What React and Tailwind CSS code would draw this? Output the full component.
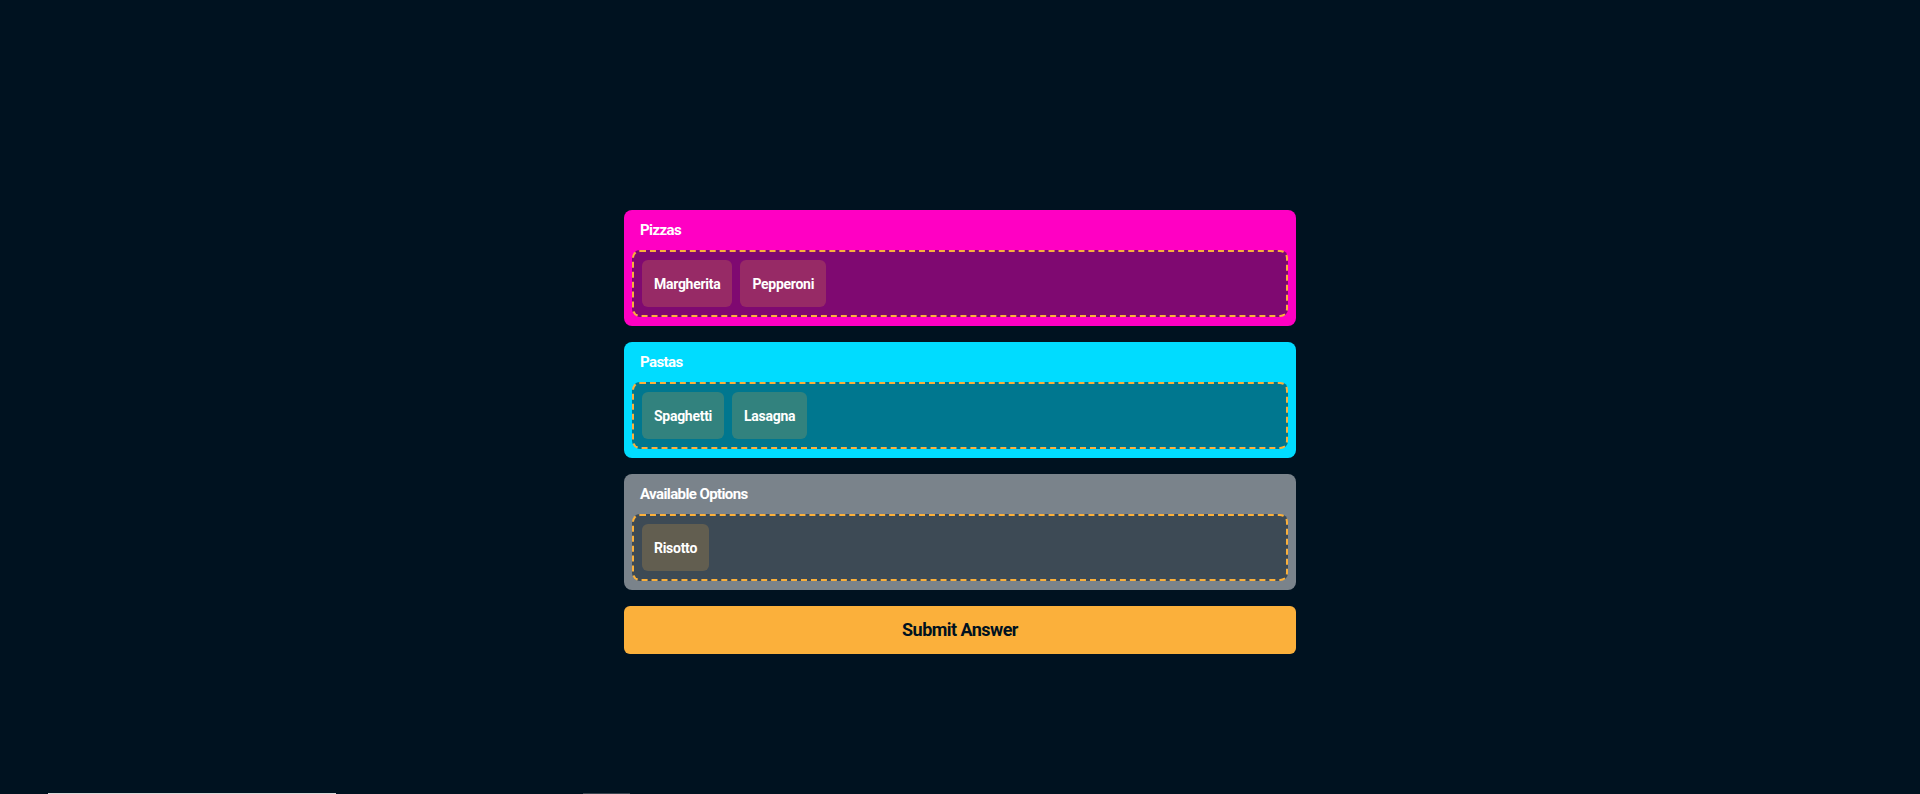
import { useState } from "react";

const groups = [
    { id: "pizzas", title: "Pizzas", card: "bg-[#ff00c3]", items: ["Margherita", "Pepperoni"] },
    { id: "pastas", title: "Pastas", card: "bg-[#00dcff]", items: ["Spaghetti", "Lasagna"] },
    { id: "pool", title: "Available Options", card: "bg-[#7a838b]", items: ["Risotto"] },
];

const font = { fontFamily: "Roboto, 'Liberation Sans', sans-serif" };

const Chip = ({ name }) => (
    <div className="h-[47px] px-3 flex items-center rounded-md bg-[#fbb03b]/20 text-white text-sm font-bold tracking-[-0.02em] cursor-grab select-none">
        {name}
    </div>
);

const Group = ({ group }) => (
    <div className={`${group.card} rounded-lg px-2 pt-2 pb-[9px]`}>
        <div className="px-2 h-6 mb-2 flex items-center text-white text-[15px] font-bold tracking-[-0.04em]">
            {group.title}
        </div>
        <div className="h-[67px] p-2 flex gap-2 border-2 border-dashed border-[#fbb03b] rounded-lg bg-[#001220]/50">
            {group.items.map((item) => (
                <Chip key={item} name={item} />
            ))}
        </div>
    </div>
);

const App = () => {
    const [submitted, setSubmitted] = useState(false);

    return (
        <div className="w-full bg-[#001220]" style={font}>
            <div className="h-[793px] pt-[210px] flex justify-center">
                <div className="w-[672px] flex flex-col gap-4">
                    {groups.map((group) => (
                        <Group key={group.id} group={group} />
                    ))}
                    <button
                        onClick={() => setSubmitted(true)}
                        className="h-12 rounded-md bg-[#fbb03b] text-[#001220] text-lg font-bold tracking-[-0.03em]"
                    >
                        Submit Answer
                    </button>
                </div>
            </div>
            <div className="h-px flex">
                <div className="ml-[48px] w-[288px] bg-[#d9d9d9]"></div>
                <div className="ml-[247px] w-[47px] bg-[#3a4550]"></div>
            </div>
        </div>
    );
};

export default App;
